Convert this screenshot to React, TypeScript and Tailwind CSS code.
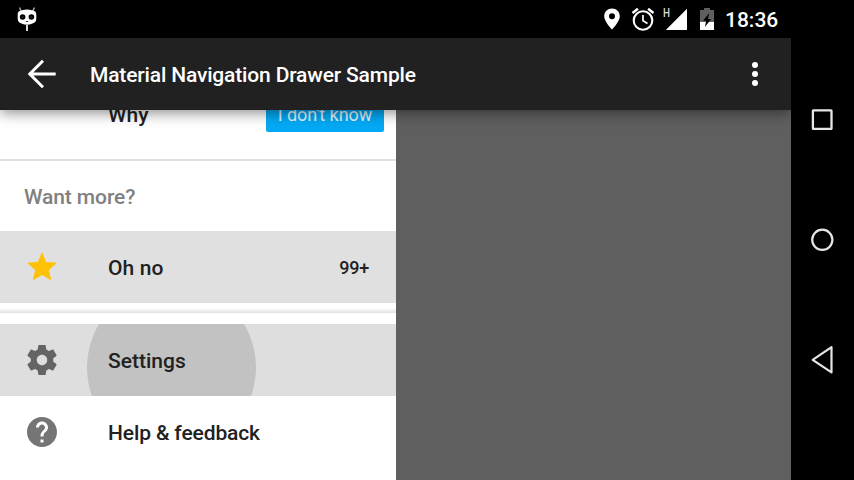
import type { ReactNode } from "react";

const STAR = "M12 17.27L18.18 21l-1.64-7.03L22 9.24l-7.19-.61L12 2 9.19 8.63 2 9.24l5.46 4.73L5.82 21z";
const GEAR =
  "M19.43 12.98c.04-.32.07-.64.07-.98s-.03-.66-.07-.98l2.11-1.65c.19-.15.24-.42.12-.64l-2-3.46c-.12-.22-.39-.3-.61-.22l-2.49 1c-.52-.4-1.08-.73-1.69-.98l-.38-2.65C14.46 2.18 14.25 2 14 2h-4c-.25 0-.46.18-.49.42l-.38 2.65c-.61.25-1.17.59-1.69.98l-2.49-1c-.23-.09-.49 0-.61.22l-2 3.46c-.13.22-.07.49.12.64l2.11 1.65c-.04.32-.07.65-.07.98s.03.66.07.98l-2.11 1.65c-.19.15-.24.42-.12.64l2 3.46c.12.22.39.3.61.22l2.49-1c.52.4 1.08.73 1.69.98l.38 2.65c.03.24.24.42.49.42h4c.25 0 .46-.18.49-.42l.38-2.65c.61-.25 1.17-.59 1.69-.98l2.49 1c.23.09.49 0 .61-.22l2-3.46c.12-.22.07-.49-.12-.64l-2.11-1.65zM12 15.5c-1.93 0-3.5-1.57-3.5-3.5s1.57-3.5 3.5-3.5 3.5 1.57 3.5 3.5-1.57 3.5-3.5 3.5z";
const HELP =
  "M12 2C6.48 2 2 6.48 2 12s4.48 10 10 10 10-4.48 10-10S17.52 2 12 2zm1 17h-2v-2h2v2zm2.07-7.75l-.9.92C13.45 12.9 13 13.5 13 15h-2v-.5c0-1.1.45-2.1 1.17-2.83l1.24-1.26c.37-.36.59-.86.59-1.41 0-1.1-.9-2-2-2s-2 .9-2 2H8c0-2.21 1.79-4 4-4s4 1.79 4 4c0 .88-.36 1.68-.93 2.25z";

function ItemIcon({ d, className }: { d: string; className: string }) {
  return (
    <svg viewBox="0 0 24 24" className={`h-9 w-9 shrink-0 ${className}`} fill="currentColor">
      <path d={d} />
    </svg>
  );
}

interface ItemProps {
  icon?: ReactNode;
  label: string;
  labelClass?: string;
  className?: string;
  children?: ReactNode;
}

function Item({ icon, label, labelClass = "pt-[2px]", className = "", children }: ItemProps) {
  return (
    <div className={`flex h-[72px] shrink-0 items-center pl-6 ${className}`}>
      <div className="z-10 w-[84px] shrink-0">{icon}</div>
      <span className={`z-10 flex-1 text-[21px] font-medium leading-6 text-[#212121] ${labelClass}`}>{label}</span>
      {children}
    </div>
  );
}

function StatusBar() {
  return (
    <div className="flex h-[38px] shrink-0 items-center bg-black pl-[17px] pr-[11px] text-white">
      <svg width="20" height="26" viewBox="0 0 20 26" fill="white">
        <path d="M2.500 1.500l1.800 3.700M17.500 1.500l-1.800 3.700" stroke="#aaa" strokeWidth="1.400" />
        <path d="M5 4.2Q10 3 15 4.2Q19.300 4.6 19.300 8.5V12.500Q19.300 16.800 15.5 17.400Q10 20 4.5 17.400Q.7 16.800 .7 12.500V8.5Q.7 4.6 5 4.2Z" />
        <circle cx="5.600" cy="11" r="2.800" fill="black" />
        <circle cx="14.400" cy="11" r="2.800" fill="black" />
        <path d="M4.600 11h2M13.400 11h2" stroke="#444" strokeWidth="1" />
        <path d="M8.700 15.500h2.600" stroke="#444" strokeWidth="1" />
        <rect x="9" y="19" width="2" height="6" fill="#ddd" />
      </svg>
      <div className="ml-auto flex items-center">
        <svg width="16" height="22" viewBox="0 0 16 22" fill="white">
          <path fillRule="evenodd" d="M8 .5C3.6.5.2 3.9.2 8.2.2 13.6 8 21.6 8 21.6s7.8-8 7.8-13.4C15.800 3.900 12.400.5 8 .5zM8 5.200a3 3 0 1 1 0 6a3 3 0 0 1 0-6z" />
        </svg>
        <svg className="ml-[11px]" width="24" height="24" viewBox="0 0 24 24" fill="none" stroke="white">
          <circle cx="12" cy="13.500" r="9.300" strokeWidth="2.100" />
          <path d="M12 8v5.800l4.500 2.700" strokeWidth="1.700" />
          <path d="M1.500 6L6.900 1.700M22.500 6L17.100 1.700" strokeWidth="2.400" />
        </svg>
        <div className="ml-[8px] flex h-[24px] w-[25px]">
          <span className="w-[7px] origin-left scale-x-[0.82] text-[12px] font-medium leading-[13px] text-[#ddd]">H</span>
          <svg width="25" height="24" viewBox="0 0 25 24" className="-ml-[7px] shrink-0" fill="white">
            <path d="M2.800 23L24 1.800V23Z" />
          </svg>
        </div>
        <svg className="ml-[12px]" width="14" height="22" viewBox="0 0 14 22">
          <path d="M0 2H4V0H10V2H14V14H0Z" fill="#606060" />
          <rect y="14" width="14" height="8" fill="white" />
          <path d="M9.300 5L3 12.800H6.200L4.900 19L11.200 11H7.900Z" fill="black" />
        </svg>
        <span className="ml-[11px] w-[55px] pt-px text-[21px] font-medium leading-6">18:36</span>
      </div>
    </div>
  );
}

function Toolbar() {
  return (
    <div className="z-20 flex h-[72px] shrink-0 items-center bg-[#212121] pl-6 pr-[18px] text-white shadow-[0_3px_13px_rgba(0,0,0,0.45)]">
      <svg width="36" height="36" viewBox="0 0 36 36" fill="none" stroke="white" strokeWidth="3">
        <path d="M31.700 18H6M19 4.800L5.800 18L19 31.200" />
      </svg>
      <h1 className="ml-[30px] flex-1 whitespace-nowrap pt-[2px] text-[21px] font-medium leading-6 tracking-[-0.16px]">
        Material Navigation Drawer Sample
      </h1>
      <svg width="36" height="36" viewBox="0 0 36 36" fill="white">
        <circle cx="18" cy="9" r="3" />
        <circle cx="18" cy="18" r="3" />
        <circle cx="18" cy="27" r="3" />
      </svg>
    </div>
  );
}

function Drawer() {
  return (
    <div className="flex w-[396px] shrink-0 flex-col overflow-hidden bg-white">
      <Item label="Why" labelClass="" className="-mt-[31px] pr-3">
        <div className="flex h-[34px] w-[118px] items-center justify-center rounded-[2px] bg-[#03a9f4] pb-[2px] text-[18px] tracking-[-0.06px] text-[#e4f4fc]">
          I don&apos;t know
        </div>
      </Item>
      <div className="mt-2 h-[2px] shrink-0 bg-[#e0e0e0]" />
      <div className="flex h-[70px] shrink-0 items-center pl-6 pt-[3px] text-[21px] font-medium tracking-[-0.1px] text-[#808080]">
        Want more?
      </div>
      <Item
        icon={<ItemIcon d={STAR} className="text-[#ffc107]" />}
        label="Oh no"
        labelClass="pt-[2px] tracking-[0.1px]"
        className="bg-[#e0e0e0] pr-[27px]"
      >
        <span className="text-[18px] font-medium tracking-[-0.2px] text-[#212121]">99+</span>
      </Item>
      <div className="mt-[5px] h-[5px] shrink-0 bg-gradient-to-b from-white to-[#e0e0e0]" />
      <div className="mt-[11px] flex shrink-0 flex-col">
        <Item icon={<ItemIcon d={GEAR} className="text-[#646464]" />} label="Settings" className="relative overflow-hidden bg-[#dedede]">
          <div className="absolute -top-[41px] left-[87px] h-[169px] w-[169px] rounded-full bg-[#c2c2c2]" />
        </Item>
        <Item
          icon={<ItemIcon d={HELP} className="text-[#757575]" />}
          label="Help & feedback"
          labelClass="pt-[2px] tracking-[-0.12px]"
        />
      </div>
    </div>
  );
}

function NavigationBar() {
  return (
    <div className="flex w-[63px] flex-col items-center bg-black pr-px pt-[108px]">
      <svg width="24" height="24" viewBox="0 0 24 24" fill="none" stroke="#e6e6e6" strokeWidth="2.300">
        <rect x="2.900" y="2.300" width="18.600" height="18.600" rx=".5" />
      </svg>
      <svg className="mt-24" width="24" height="24" viewBox="0 0 24 24" fill="none" stroke="#e6e6e6" strokeWidth="2.200">
        <circle cx="12.300" cy="11.800" r="10.100" />
      </svg>
      <svg className="mt-[93px]" width="24" height="30" viewBox="0 0 24 30" fill="none" stroke="#e6e6e6" strokeWidth="2.200" strokeLinejoin="round">
        <path d="M2.700 14.800L21.500 2.200V27.400Z" />
      </svg>
    </div>
  );
}

export default function App() {
  return (
    <div className="flex h-[480px] w-[854px] overflow-hidden bg-black font-[Roboto,sans-serif]">
      <div className="flex w-[791px] shrink-0 flex-col overflow-hidden">
        <StatusBar />
        <Toolbar />
        <div className="flex min-h-0 flex-1 bg-[#5f5f5f]">
          <Drawer />
        </div>
      </div>
      <NavigationBar />
    </div>
  );
}
